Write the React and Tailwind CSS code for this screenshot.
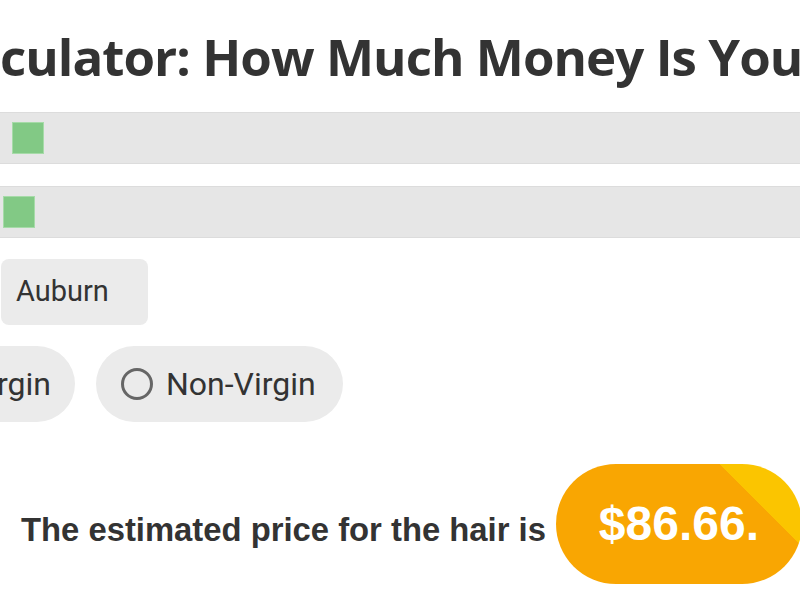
export default function App() {
  return (
    <div className="w-[800px] h-[600px] overflow-hidden bg-white flex flex-col text-[#333]">
      <div className="mt-[31px] h-[52px] flex whitespace-nowrap leading-none text-[51px] tracking-[-0.95px] font-bold font-['Open_Sans',sans-serif]">
        <span className="w-0 flex justify-end">Hair Cal</span>
        <span>culator: How Much Money Is Your Hair Worth?</span>
      </div>

      <div className="mt-[29px] h-[52px] bg-[#e6e6e6] border-y border-[#dcdcdc] flex items-center pl-[12px]">
        <div className="w-[32px] h-[32px] bg-[#82c985] border border-[#a6dba8]" />
      </div>
      <div className="mt-[22px] h-[52px] bg-[#e6e6e6] border-y border-[#dcdcdc] flex items-center pl-[3px]">
        <div className="w-[32px] h-[32px] bg-[#82c985] border border-[#a6dba8]" />
      </div>

      <div className="mt-[21px] flex pl-[1px]">
        <div className="w-[147px] h-[66px] rounded-[8px] bg-[#ebebeb] flex items-center pl-[15px] text-[29px] font-['Roboto',sans-serif]">
          Auburn
        </div>
      </div>

      <div className="mt-[21px] flex items-center gap-[21px] text-[32px] font-['Roboto',sans-serif]">
        <div className="w-[75px] flex justify-end">
          <div className="shrink-0 h-[76px] rounded-full bg-[#ebebeb] flex items-center pl-[25px] pr-[24px] gap-[13px] whitespace-nowrap">
            <div className="w-[32px] h-[32px] rounded-full border-[3px] border-[#666]" />
            <span>Virgin</span>
          </div>
        </div>
        <div className="shrink-0 w-[247px] h-[76px] rounded-full bg-[#ebebeb] flex items-center pl-[25px] gap-[13px] whitespace-nowrap">
          <div className="w-[32px] h-[32px] rounded-full border-[3px] border-[#666]" />
          <span>Non-Virgin</span>
        </div>
      </div>

      <div className="mt-[42px] flex items-center pl-[21px] whitespace-nowrap font-['Liberation_Sans',Arial,sans-serif] font-bold">
        <span className="text-[32.8px] leading-none mt-[12px]">The estimated price for the hair is</span>
        <div className="ml-[10px] shrink-0 w-[246px] h-[120px] rounded-full bg-[linear-gradient(225deg,#fbc500_58px,#f9a602_58px)] flex items-center justify-center text-white text-[48px] leading-none">
          $86.66.
        </div>
      </div>
    </div>
  );
}
